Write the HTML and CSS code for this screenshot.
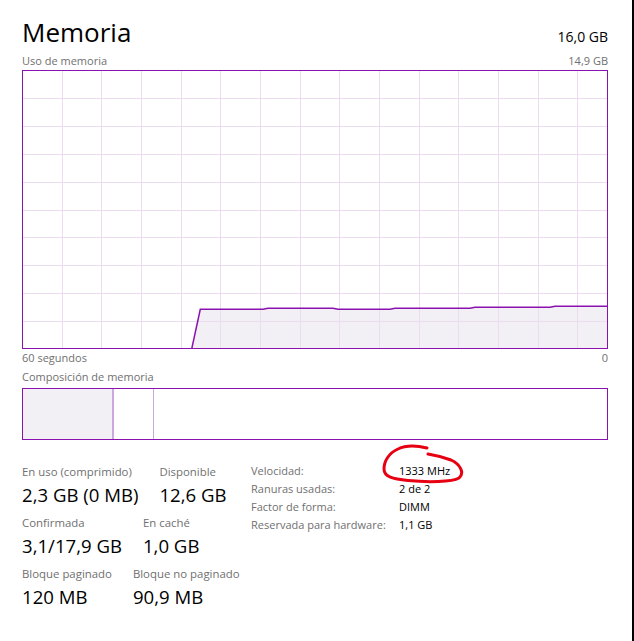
FILE: index.html
```html
<!DOCTYPE html>
<html lang="es">
<head>
<meta charset="utf-8">
<title>Memoria</title>
<link rel="stylesheet" href="styles.css">
</head>
<body>
<div class="window">
  <div class="head">
    <h1 class="title">Memoria</h1>
    <div class="total">16,0 GB</div>
  </div>
  <div class="caption-row first">
    <span>Uso de memoria</span>
    <span>14,9 GB</span>
  </div>
  <div class="graph">
    <svg width="586" height="279" viewBox="0 0 586 279">
      <polygon class="area" points="169.7,279 178.3,239.3 241,239.3 246,238.3 311,238.3 316,239.3 368,239.3 373,238.3 448,238.3 453,237.3 528,237.3 533,236.3 585,236.3 585,279"/>
      <path class="grid" d="M40.5 0V279M79.5 0V279M119.5 0V279M159.5 0V279M198.5 0V279M238.5 0V279M278.5 0V279M317.5 0V279M357.5 0V279M397.5 0V279M436.5 0V279M476.5 0V279M516.5 0V279M555.5 0V279M0 28.5H586M0 56.5H586M0 84.5H586M0 112.5H586M0 140.5H586M0 167.5H586M0 195.5H586M0 223.5H586M0 251.5H586"/>
      <polyline class="line" points="169.7,279 178.3,239.3 241,239.3 246,238.3 311,238.3 316,239.3 368,239.3 373,238.3 448,238.3 453,237.3 528,237.3 533,236.3 585,236.3"/>
      <rect class="frame" x="0.5" y="0.5" width="585" height="278"/>
    </svg>
  </div>
  <div class="caption-row axis">
    <span>60 segundos</span>
    <span>0</span>
  </div>
  <div class="caption-row comp-label">
    <span>Composición de memoria</span>
  </div>
  <div class="comp">
    <div class="seg seg-used"></div>
    <div class="seg seg-mod"></div>
    <div class="seg seg-rest"></div>
  </div>
  <div class="stats">
    <div class="stats-left">
      <div class="stat-row">
        <div class="stat"><div class="label">En uso (comprimido)</div><div class="value">2,3 GB (0 MB)</div></div>
        <div class="stat"><div class="label">Disponible</div><div class="value">12,6 GB</div></div>
      </div>
      <div class="stat-row">
        <div class="stat"><div class="label">Confirmada</div><div class="value">3,1/17,9 GB</div></div>
        <div class="stat"><div class="label">En caché</div><div class="value">1,0 GB</div></div>
      </div>
      <div class="stat-row">
        <div class="stat"><div class="label">Bloque paginado</div><div class="value">120 MB</div></div>
        <div class="stat"><div class="label">Bloque no paginado</div><div class="value">90,9 MB</div></div>
      </div>
    </div>
    <div class="stats-right">
      <span class="k">Velocidad:</span><span class="v">1333 MHz</span>
      <span class="k">Ranuras usadas:</span><span class="v">2 de 2</span>
      <span class="k">Factor de forma:</span><span class="v">DIMM</span>
      <span class="k">Reservada para hardware:</span><span class="v">1,1 GB</span>
    </div>
  </div>
  <svg class="scribble" width="90" height="45" viewBox="0 0 90 45">
    <path d="M47,5 C35,2 24,3 18,6 C9,10 4,18 4,26 C4,34 13,36 28,37.5 C48,39.5 72,39 79,35 C85,30 80,21 71,17 C63,14 54,12 48,11"/>
  </svg>
</div>
</body>
</html>
```
FILE: styles.css
```css
* { box-sizing: border-box; }
html, body { margin: 0; padding: 0; background: #fff; }
body {
  font-family: "Open Sans", "Noto Sans", "DejaVu Sans", sans-serif;
  color: #000;
}
.window {
  position: relative;
  width: 634px;
  height: 641px;
  padding: 0 24px 0 22px;
  border-right: 2px solid #000;
  overflow: hidden;
}
.head {
  display: flex;
  justify-content: space-between;
  align-items: baseline;
  padding-top: 19px;
}
.title {
  margin: 0;
  font-size: 26px;
  line-height: 26px;
  font-weight: 400;
}
.total {
  font-size: 14px;
  line-height: 16px;
}
.caption-row {
  display: flex;
  justify-content: space-between;
  font-size: 11px;
  line-height: 13px;
  color: #707070;
}
.caption-row.first { margin-top: 9px; }
.graph { margin-top: 3px; height: 279px; }
.graph svg { display: block; }
.area { fill: #f3f0f5; }
.grid { stroke: #ebdcf0; stroke-width: 1; fill: none; }
.line { stroke: #8b12ae; stroke-width: 1.5; fill: none; }
.frame { stroke: #8b12ae; stroke-width: 1; fill: none; }
.caption-row.axis { margin-top: 2px; }
.caption-row.comp-label { margin-top: 6px; }
.comp {
  margin-top: 5px;
  height: 52px;
  border: 1px solid #8b12ae;
  display: flex;
}
.seg-used { width: 91px; background: #f3f0f5; border-right: 2px solid #cda8dc; }
.seg-mod { width: 40px; border-right: 1px solid #cda8dc; }
.seg-rest { flex: 1; }
.stats {
  margin-top: 22px;
  display: flex;
}
.stats-left {
  width: 229px;
  padding-top: 2.5px;
  display: flex;
  flex-direction: column;
  gap: 9px;
}
.stat-row { display: flex; gap: 21px; }
.label {
  font-size: 11.4px;
  line-height: 14px;
  color: #707070;
  white-space: nowrap;
}
.value {
  margin-top: 4px;
  font-size: 18.6px;
  line-height: 24px;
  white-space: nowrap;
}
.stats-right {
  display: grid;
  grid-template-columns: 148px auto;
  align-content: start;
  font-size: 11px;
  line-height: 18px;
}
.stats-right .k { color: #707070; white-space: nowrap; }
.stats-right .v { color: #000; white-space: nowrap; }
.scribble {
  position: absolute;
  left: 380px;
  top: 443px;
}
.scribble path {
  fill: none;
  stroke: #e60012;
  stroke-width: 3;
  stroke-linecap: round;
  stroke-linejoin: round;
}
```
